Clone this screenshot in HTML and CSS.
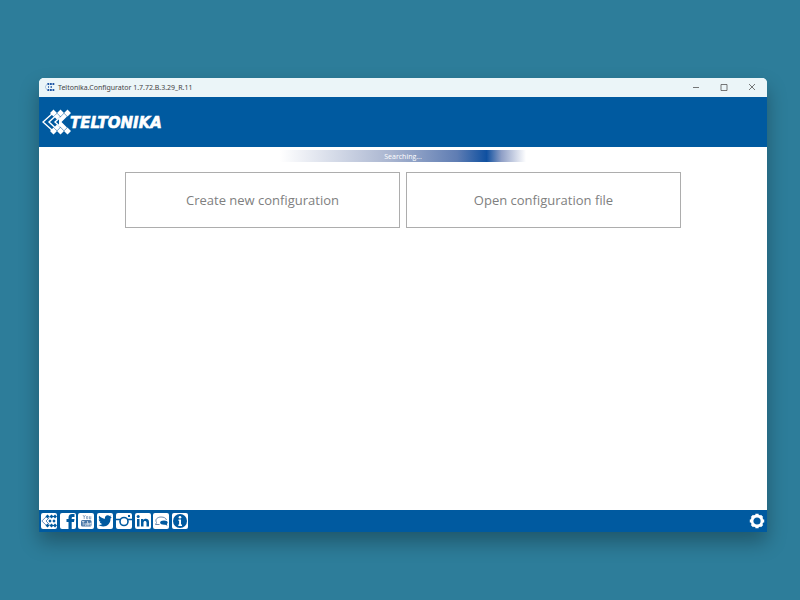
FILE: index.html
```html
<!DOCTYPE html>
<html lang="en">
<head>
  <meta charset="UTF-8" />
  <meta name="viewport" content="width=device-width, initial-scale=1" />
  <title>Teltonika.Configurator</title>
  <link rel="stylesheet" href="styles.css">
</head>
<body>

  <div class="window">

    <!-- Title bar -->
    <div class="titlebar">
      <svg class="app-icon" viewBox="0 0 10 8">
        <path d="M3 0 0 4l3 4" fill="none" stroke="#a9c3dc" stroke-width="1" />
        <path d="M2.500 1h1.800M5 1h1.800M7.500 1h1.800M2.500 7h1.800M5 7h1.800M7.500 7h1.800" stroke="#1d55a5" stroke-width="1.800" />
        <path d="M3 4h1M5.500 4h1.500" stroke="#1d55a5" stroke-width="1.500" />
      </svg>
      <span class="title">Teltonika.Configurator 1.7.72.B.3.29_R.11</span>
      <div class="window-controls">
        <button type="button" aria-label="Minimize"><svg viewBox="0 0 8 8"><path d="M1 4.500h6" /></svg></button>
        <button type="button" aria-label="Maximize"><svg viewBox="0 0 8 8"><path d="M1 1.500h6v6H1z" /></svg></button>
        <button type="button" aria-label="Close"><svg viewBox="0 0 8 8"><path d="M1 1l6 6M7 1 1 7" /></svg></button>
      </div>
    </div>

    <!-- Brand header -->
    <header class="header">
      <svg class="brand-mark" viewBox="0 0 29 26">
        <g fill="none" stroke="#fff" stroke-width="1.400">
          <path d="M11 4 1 13l10 9" />
          <path d="M14 6.500 7 13l7 6.500" />
          <path d="M18 8.500 13 13l5 4.500" />
        </g>
        <path fill="#fff" d="M11.500 .500l3.500 3.500-3.500 3.500L8 4zM18.500 .500 22 4l-3.500 3.500L15 4zM25.500 .500 29 4l-3.500 3.500L22 4zM11.500 18.500 15 22l-3.500 3.500L8 22zM18.500 18.500 22 22l-3.500 3.500L15 22zM25.500 18.500 29 22l-3.500 3.500L22 22z" />
        <path fill="#fff" d="M15 4.500 18 7.500 15 10.500 12 7.500zM22 4.500l3 3L19.500 13l5.500 5.500-3 3L17 16.500V9.500zM15 15.500l3 3-3 3-3-3z" />
      </svg>
      <span class="brand-name">TELTONIKA</span>
    </header>

    <main class="content">
      <div class="search-bar" role="status">Searching...</div>
      <div class="actions">
        <button type="button" class="action">Create new configuration</button>
        <button type="button" class="action">Open configuration file</button>
      </div>
    </main>

    <!-- Links and settings -->
    <footer class="footer">
      <nav class="links">
        <a href="#" aria-label="Teltonika">
          <svg viewBox="0 0 16 16">
            <path d="M6 3 .8 8 6 13M8.500 4.500 5 8l3.500 3.500" fill="none" stroke="#6c8fbd" />
            <path d="M6.500 1.500l2 2-2 2-2-2zM10.500 1.500l2 2-2 2-2-2zM14 1.500l2 2-2 2-2-2zM6.500 10.500l2 2-2 2-2-2zM10.500 10.500l2 2-2 2-2-2zM14 10.500l2 2-2 2-2-2zM9 6.300 10.700 8 9 9.700 7.300 8zM13 6.300 14.700 8 13 9.700 11.300 8z" />
          </svg>
        </a>
        <a href="#" aria-label="Facebook">
          <svg viewBox="0 0 16 16"><path d="M8.500 16V9H6.500V6h2V4.500C8.500 2 10 1 12 1h2.500v3H13c-1 0-1.300.4-1.300 1.200V6h2.800L14 9h-2.300v7z" /></svg>
        </a>
        <a href="#" aria-label="YouTube">
          <svg viewBox="0 0 16 16">
            <path d="M5 2l1.200 2v2M7.500 2 6.200 4M8.500 3.500v2.200h1.300V3.500zM11.500 3.200v2.700h1.300V3.200" fill="none" stroke="#6b8bb0" stroke-width=".7" />
            <rect x="3" y="7" width="10.500" height="6.500" rx="1.500" fill="#4a78a8" />
            <path d="M4 8.500h2.500M5.200 8.500v4M7 10v2.300h1.300V10M9.500 8v4.300h1V10h-1M12.800 12.300h-1V10h1v1h-1" fill="none" stroke="#fff" stroke-width=".6" />
          </svg>
        </a>
        <a href="#" aria-label="Twitter">
          <svg viewBox="0 0 16 16"><path d="M14.800 4.200l-1.300 1.300c.2 4.500-3 8-7.300 8-1.800 0-3.400-.5-4.800-1.400 1.500.1 2.900-.3 4-1.100-1.300 0-2.200-.8-2.600-1.900h1.200C2.600 8.700 1.800 7.600 1.800 6.200l1.200.3C1.700 5.500 1.500 4 2.200 2.700 3.700 4.500 5.700 5.500 8 5.700 7.600 3.700 8.900 2.300 10.700 2.300c.8 0 1.500.3 2 .8l1.700-.6-1.100 1.500z" /></svg>
        </a>
        <a href="#" aria-label="Instagram">
          <svg viewBox="0 0 16 16">
            <path d="M0 6.500h4M12 6.500h4" stroke="#005aa0" stroke-width="1.300" />
            <circle cx="8" cy="8.500" r="4" fill="none" stroke="#005aa0" stroke-width="1.600" />
            <path d="M12 2h2v2h-2z" />
          </svg>
        </a>
        <a href="#" aria-label="LinkedIn">
          <svg viewBox="0 0 16 16"><path d="M2 6h2.500v7.500H2zM6 6h2.300v1c1.600-2 5.700-1.600 5.700 2v4.500h-2.500V9.700c0-2.200-3-2.200-3 0v3.800H6z" /><circle cx="3.200" cy="3.500" r="1.500" /></svg>
        </a>
        <a href="#" aria-label="Forum">
          <svg viewBox="0 0 16 16">
            <path d="M2.500 11.500 3.500 9.500C1.500 6 5 4 8 4s5 1 5.500 3M2.500 11.500h4" fill="none" stroke="#6b8bb0" />
            <path d="M11 7.500c2.300 0 3.700.9 3.700 2.100 0 .6-.3 1.100-.9 1.500l.7 1.600-2.200-.9c-2.700.3-5.200-.5-5.200-2.200 0-1.200 1.600-2.100 3.900-2.100z" />
          </svg>
        </a>
        <a href="#" aria-label="About">
          <svg viewBox="0 0 16 16"><circle cx="8" cy="8" r="7" /><circle cx="8" cy="4.200" r="1.300" fill="#fff" /><path d="M6.500 6.500H9v5h1V13H6.300v-1.500h.8V8h-.6z" fill="#fff" /></svg>
        </a>
      </nav>
      <button type="button" class="settings" aria-label="Settings">
        <svg viewBox="0 0 16 16">
          <circle cx="8" cy="8" r="5" fill="none" stroke="#fff" stroke-width="2.800" />
          <path d="M8 .800v2.500M8 12.700v2.500M.800 8h2.500M12.700 8h2.500M2.900 2.900l1.800 1.800M11.300 11.300l1.800 1.800M13.100 2.900l-1.800 1.800M4.700 11.300l-1.800 1.800" stroke="#fff" stroke-width="3.200" />
        </svg>
      </button>
    </footer>

  </div>

</body>
</html>
```

FILE: styles.css
```css
* {
  margin: 0;
  padding: 0;
  box-sizing: border-box;
}

body {
  min-height: 100vh;
  display: flex;
  padding: 78px 33px 68px 39px;
  background: #2d7d9a;
  font-family: "Open Sans", "Noto Sans", sans-serif;
}

button {
  border: none;
  background: none;
  font-family: inherit;
  cursor: pointer;
}

svg {
  display: block;
}

.window {
  flex: 1;
  display: flex;
  flex-direction: column;
  background: #fff;
  border-radius: 5px 5px 0 0;
  overflow: hidden;
  box-shadow: 0 10px 20px rgba(0, 0, 0, 0.3);
}

.titlebar {
  display: flex;
  align-items: center;
  height: 19px;
  padding: 0 1px 1px 6px;
  background: #ebf5f8;
}

.app-icon {
  width: 10px;
  height: 8px;
}

.title {
  margin-left: 3px;
  font-family: "Noto Sans", sans-serif;
  font-size: 7px;
  color: #444;
}

.window-controls {
  display: flex;
  margin-left: auto;
}

.window-controls button {
  width: 28px;
  height: 18px;
  display: flex;
  align-items: center;
  justify-content: center;
}

.window-controls svg {
  width: 8px;
  height: 8px;
  fill: none;
  stroke: #555;
  stroke-width: 0.8;
}

.header {
  display: flex;
  align-items: center;
  height: 50px;
  padding-left: 3px;
  background: #005aa0;
}

.brand-mark {
  width: 29px;
  height: 26px;
}

.brand-name {
  margin-left: -1px;
  padding-top: 2px;
  font-family: "DejaVu Sans", sans-serif;
  font-size: 15px;
  font-weight: bold;
  font-style: italic;
  color: #fff;
  -webkit-text-stroke: 0.6px #fff;
}

.content {
  flex: 1;
  display: flex;
  flex-direction: column;
  align-items: center;
  gap: 10px;
  padding: 3px 20px;
}

.search-bar {
  width: 246px;
  height: 12px;
  line-height: 13px;
  font-size: 7px;
  text-align: center;
  color: #fff;
  background: linear-gradient(to right, #fff, #a9b5d0 45%, #5f7db3 72%, #0f50a0 84%, #8f9fc6 90%, #fff);
}

.actions {
  display: grid;
  grid-template-columns: 1fr 1fr;
  gap: 6px;
  width: 100%;
  max-width: 556px;
}

.action {
  height: 56px;
  border: 1px solid #adadad;
  background: #fff;
  font-size: 13px;
  color: #808080;
}

.footer {
  display: flex;
  align-items: center;
  justify-content: space-between;
  height: 22px;
  padding: 0 2px;
  background: #005aa0;
}

.links {
  display: flex;
  justify-content: space-between;
  width: 147px;
}

.links a {
  width: 16px;
  height: 16px;
  border-radius: 2px;
  background: #fff;
}

.links svg {
  width: 16px;
  height: 16px;
  fill: #005aa0;
}

.settings svg {
  width: 16px;
  height: 16px;
}
```
